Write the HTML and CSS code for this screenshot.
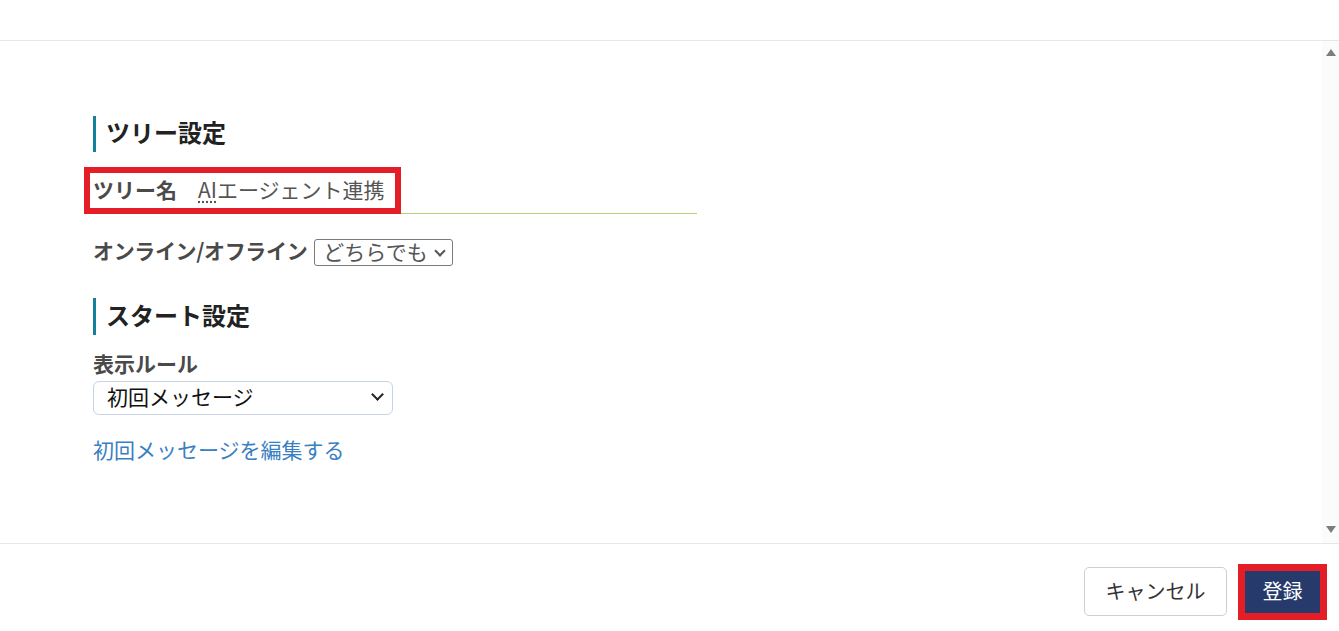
FILE: index.html
```html
<!DOCTYPE html>
<html lang="ja">
<head>
<meta charset="utf-8">
<title>ツリー設定</title>
<link rel="stylesheet" href="styles.css">
</head>
<body>
<div class="page">
  <header class="topbar"></header>
  <div class="body-row">
    <main class="content">
      <h2 class="section-title">ツリー設定</h2>
      <div class="name-field">
        <span class="name-box">
          <span class="field-label">ツリー名</span>
          <span class="name-value"><abbr class="abbr" title="Artificial Intelligence">AI</abbr>エージェント連携</span>
        </span>
      </div>
      <div class="online-row">
        <span class="field-label online-label">オンライン/オフライン</span>
        <span class="small-select">どちらでも<span class="chev chev-small"></span></span>
      </div>
      <h2 class="section-title section-title-2">スタート設定</h2>
      <div class="field-label rule-label">表示ルール</div>
      <div class="big-select">初回メッセージ<span class="chev"></span></div>
      <a class="edit-link" href="#">初回メッセージを編集する</a>
    </main>
    <div class="scrollbar">
      <span class="arrow-up"></span>
      <span class="arrow-down"></span>
    </div>
  </div>
  <footer class="footer">
    <button class="btn btn-cancel">キャンセル</button>
    <button class="btn btn-submit">登録</button>
  </footer>
</div>
</body>
</html>
```

FILE: styles.css
```css
* { box-sizing: border-box; }
html, body { margin: 0; padding: 0; background: #fff; }
body {
  font-family: "Noto Sans CJK JP", "Noto Sans", "Liberation Sans", sans-serif;
  width: 1339px;
  height: 631px;
  overflow: hidden;
}
.page { display: flex; flex-direction: column; height: 631px; }
.topbar { height: 41px; border-bottom: 1px solid #e6e6e6; flex: none; }
.body-row { display: flex; height: 502px; flex: none; }
.content { flex: 1; padding: 75px 0 0 93px; }
.scrollbar {
  width: 17px;
  background: #fbfbfb;
  display: flex;
  flex-direction: column;
  justify-content: space-between;
  align-items: center;
  padding: 8px 0 10px;
}
.arrow-up { width: 0; height: 0; border-left: 5px solid transparent; border-right: 5px solid transparent; border-bottom: 7px solid #7d7d7d; }
.arrow-down { width: 0; height: 0; border-left: 5px solid transparent; border-right: 5px solid transparent; border-top: 7px solid #7d7d7d; }

.section-title {
  margin: 0;
  height: 36px;
  line-height: 32px;
  padding-bottom: 4px;
  border-left: 3px solid #14809a;
  padding-left: 10px;
  font-size: 24px;
  font-weight: 700;
  color: #222;
}
.section-title-2 { margin-top: 32px; height: 37px; line-height: 33px; }

.field-label { font-size: 21px; font-weight: 700; color: #4a4a4a; }

.name-field {
  margin-top: 21px;
  width: 604px;
  padding-bottom: 5px;
  border-bottom: 1px solid #b3d37c;
  display: flex;
}
.name-box {
  display: inline-flex;
  align-items: center;
  height: 35px;
  margin-left: -3px;
  padding: 0 10px 4px 3px;
  outline: 6px solid #e41e26;
  gap: 21px;
}
.name-value { font-size: 21px; color: #555; }
.abbr { text-decoration: underline dotted; text-underline-offset: 4px; }

.online-row { margin-top: 25px; display: flex; align-items: center; gap: 7px; height: 27px; }
.online-label { letter-spacing: -0.35px; padding-bottom: 5px; }
.small-select {
  display: inline-flex;
  align-items: center;
  height: 27px;
  padding: 0 8px 4px 8px;
  border: 1px solid #7b7b7b;
  border-radius: 3px;
  font-size: 21px;
  color: #555;
  gap: 8px;
}
.chev {
  display: inline-block;
  width: 9px;
  height: 9px;
  border-right: 2.5px solid #222;
  border-bottom: 2.5px solid #222;
  transform: rotate(45deg);
  margin-top: -3px;
}
.chev-small { width: 8px; height: 8px; border-color: #555; border-width: 2.2px; margin-top: 0; }

.rule-label { margin-top: 16px; line-height: 24px; height: 28px; }
.big-select {
  margin-top: 2px;
  width: 300px;
  height: 34px;
  border: 1px solid #c8d3e6;
  border-radius: 6px;
  display: flex;
  align-items: center;
  justify-content: space-between;
  padding: 0 10px 4px 13px;
  font-size: 21px;
  color: #111;
}
.edit-link {
  display: block;
  margin-top: 23px;
  line-height: 22px;
  height: 28px;
  font-size: 21px;
  color: #3a7fc1;
  text-decoration: none;
  width: max-content;
}

.footer {
  flex: 1;
  border-top: 1px solid #e6e6e6;
  display: flex;
  justify-content: flex-end;
  align-items: center;
  padding: 8px 19px 0 0;
  gap: 18px;
}
.btn { font-family: inherit; font-size: 20px; cursor: pointer; padding: 0 0 2px; }
.btn-cancel {
  width: 143px;
  height: 49px;
  background: #fff;
  border: 1px solid #cfcfcf;
  border-radius: 5px;
  color: #333;
}
.btn-submit {
  width: 75px;
  height: 42px;
  background: #263b6c;
  border: none;
  color: #fff;
  outline: 7px solid #e41e26;
}
```
